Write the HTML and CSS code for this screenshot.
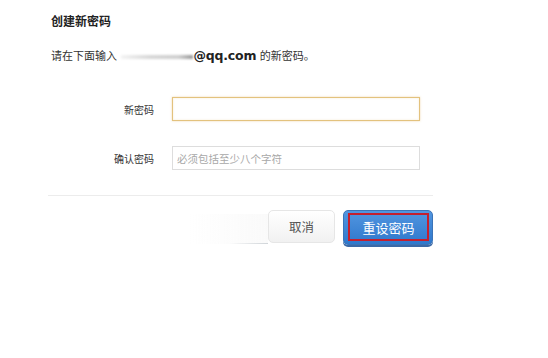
FILE: index.html
```html
<!DOCTYPE html>
<html lang="zh">
<head>
<meta charset="utf-8">
<link rel="stylesheet" href="styles.css">
</head>
<body>
<div class="panel">
  <h1 class="title">创建新密码</h1>
  <p class="intro">请在下面输入 <span class="blur"></span><span class="mail">@qq.com</span> 的新密码。</p>
  <div class="form">
    <label class="label">新密码</label>
    <div class="input focus"></div>
    <label class="label">确认密码</label>
    <div class="input"><span class="ph">必须包括至少八个字符</span></div>
  </div>
  <div class="sep"></div>
  <div class="actions">
    <span class="fade"></span>
    <button class="btn cancel">取消</button>
    <button class="btn primary"><span class="ring">重设密码</span></button>
  </div>
</div>
</body>
</html>
```
FILE: styles.css
```css
html, body { margin: 0; padding: 0; background: #fff; }
body {
  font-family: "Noto Sans CJK SC", "Liberation Sans", sans-serif;
  color: #333;
  width: 548px;
  height: 358px;
  overflow: hidden;
}
.panel {
  width: 385px;
  margin-left: 48px;
  padding-top: 12px;
}
.title {
  margin: 0 0 0 3px;
  font-size: 12px;
  line-height: 18px;
  font-weight: bold;
  color: #222;
}
.intro {
  margin: 17px 0 0 3px;
  font-size: 11px;
  line-height: 16px;
  color: #333;
  white-space: nowrap;
}
.blur {
  display: inline-block;
  width: 72px;
  height: 4px;
  margin: 0 0 1px 2px;
  vertical-align: baseline;
  background: linear-gradient(to right, #f4f4f4, #d8d8d8 40%, #cfcfcf 80%, #999);
  filter: blur(1.2px);
}
.mail {
  font-family: "DejaVu Sans", "Liberation Sans", sans-serif;
  font-weight: bold;
  font-size: 12.5px;
  color: #222;
  letter-spacing: -0.2px;
  margin-right: 1px;
}
.form {
  display: grid;
  grid-template-columns: 106px 248px;
  column-gap: 18px;
  row-gap: 25px;
  margin-top: 33px;
  align-items: center;
}
.label {
  text-align: right;
  font-size: 10px;
  color: #333;
}
.input {
  box-sizing: border-box;
  height: 24px;
  border: 1px solid #ddd;
  background: #fff;
  display: flex;
  align-items: center;
  padding-left: 4px;
}
.input.focus {
  border-color: #e3c27e;
  box-shadow: 0 0 2px rgba(226, 190, 120, 0.6), inset 0 0 2px rgba(240, 215, 160, 0.5);
}
.ph {
  font-size: 10.5px;
  color: #a8a8a8;
}
.sep {
  height: 1px;
  background: #ececec;
  margin-top: 25px;
}
.actions {
  display: flex;
  justify-content: flex-end;
  align-items: flex-start;
  gap: 8px;
  margin-top: 14px;
  position: relative;
}
.fade {
  position: absolute;
  left: 142px;
  top: 4px;
  width: 78px;
  height: 29px;
  background: linear-gradient(to right, rgba(245,245,245,0), rgba(245,245,245,0.5));
  border-bottom: 1px solid #d8dde0;
  border-image: linear-gradient(to right, rgba(0,0,0,0) 50%, #cfd4d8) 1;
}
.btn {
  box-sizing: border-box;
  font-family: "Noto Sans CJK SC", sans-serif;
  border-radius: 5px;
  padding: 0;
  cursor: pointer;
}
.cancel {
  width: 67px;
  height: 33px;
  font-size: 12.5px;
  color: #555;
  border: 1px solid #e6e6e6;
  background: linear-gradient(#ffffff, #f1f1f1);
  position: relative;
}
.primary {
  width: 90px;
  height: 35px;
  border: 1px solid #3b74b8;
  background: linear-gradient(#5296e0, #2f78cc);
  box-shadow: 0 2px 0 0 #3c69a6;
  padding: 2px 3px 3px 4px;
  display: flex;
}
.ring {
  flex: 1;
  display: flex;
  align-items: center;
  justify-content: center;
  border: 2px solid #c41f2e;
  font-size: 13px;
  color: #fff;
}
```
